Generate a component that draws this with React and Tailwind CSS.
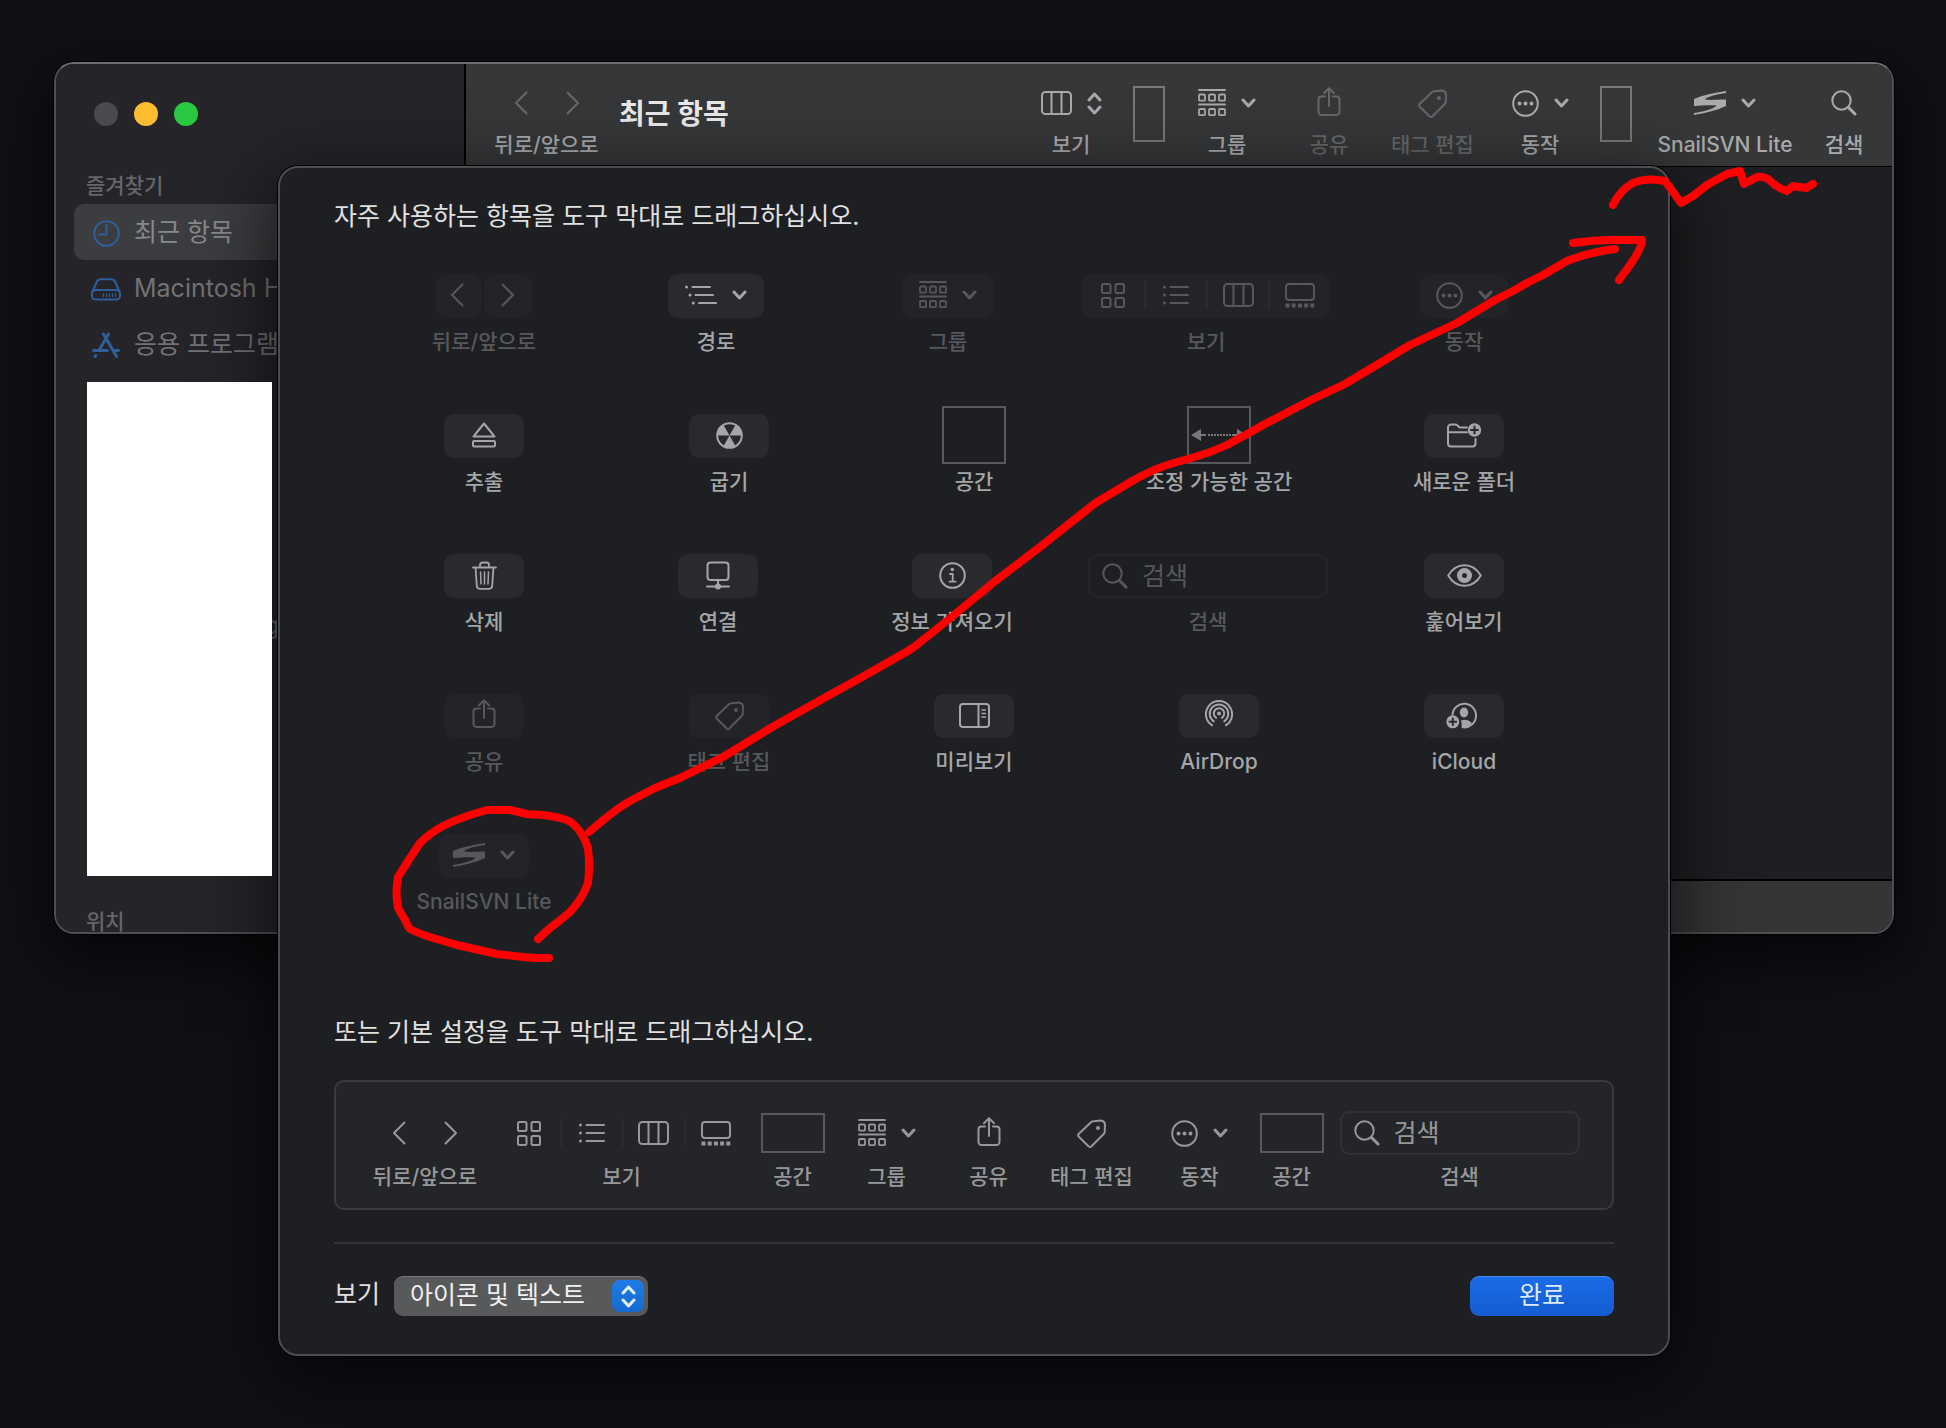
import React, { useState } from 'react';
import clsx from 'clsx';

// --- Icons ---
const Svg = ({ w, h, sw = 2, className, children }) => (
  <svg
    width={w}
    height={h}
    viewBox={`0 0 ${w} ${h}`}
    fill="none"
    stroke="currentColor"
    strokeWidth={sw}
    strokeLinecap="round"
    strokeLinejoin="round"
    aria-hidden="true"
    className={clsx('shrink-0', className)}
  >
    {children}
  </svg>
);

const BackIcon = () => <Svg w={14} h={24}><path d="M12.5 1.5 2 12l10.5 10.5" /></Svg>;
const ForwardIcon = () => <Svg w={14} h={24}><path d="M1.5 1.5 12 12 1.5 22.5" /></Svg>;
const ChevronIcon = () => <Svg w={15} h={10} sw={3}><path d="m2 2 5.5 6L13 2" /></Svg>;
const UpDownIcon = () => (
  <Svg w={15} h={23} sw={3}><path d="m2 8 5.5-6L13 8M2 15l5.5 6L13 15" /></Svg>
);

const ColumnsIcon = () => (
  <Svg w={31} h={24}>
    <rect x="1" y="1" width="29" height="22" rx="3.5" />
    <path d="M10.5 1v22M20.5 1v22" />
  </Svg>
);

const GridIcon = () => (
  <Svg w={24} h={25}>
    <rect x="1" y="1" width="8.5" height="9" rx="1.5" />
    <rect x="14.5" y="1" width="8.5" height="9" rx="1.5" />
    <rect x="1" y="15" width="8.5" height="9" rx="1.5" />
    <rect x="14.5" y="15" width="8.5" height="9" rx="1.5" />
  </Svg>
);

const ListIcon = () => (
  <Svg w={26} h={20}>
    <path d="M7.5 2H25M7.5 10H25M7.5 18H25" />
    <path d="M1.5 2h.01M1.5 10h.01M1.5 18h.01" strokeWidth="3" />
  </Svg>
);

const GalleryIcon = () => (
  <Svg w={30} h={25}>
    <rect x="1" y="1" width="28" height="16" rx="3" />
    <path d="M.5 22.5h29" strokeWidth="4" strokeLinecap="butt" strokeDasharray="4 2.2" />
  </Svg>
);

const GroupIcon = () => (
  <Svg w={28} h={28} sw={1.8}>
    <path d="M1 1h26M1 15.5h26" />
    {[1, 11, 21].map((x) => (
      <React.Fragment key={x}>
        <rect x={x} y="5.5" width="6" height="6.2" rx="1" />
        <rect x={x} y="20" width="6" height="6.2" rx="1" />
      </React.Fragment>
    ))}
  </Svg>
);

const ShareIcon = () => (
  <Svg w={24} h={29} className="-mt-1">
    <path d="M8 9.5H4.5a3 3 0 0 0-3 3V25a3 3 0 0 0 3 3h15a3 3 0 0 0 3-3V12.5a3 3 0 0 0-3-3H16" />
    <path d="M12 19V1.5M7 6.3l5-5 5 5" />
  </Svg>
);

const TagIcon = () => (
  <Svg w={29} h={29}>
    <path d="M16.5 2.2 24 1.6Q27.600 2 28 5.5l-.3 7.5q-.2 1.2-1 2L14.5 27.3q-1.5 1.3-3 0L1.8 17.8q-1.300-1.500 0-3L14 3.200q1-1 2.500-1Z" />
    <circle cx="21" cy="9" r="1.2" fill="currentColor" strokeWidth="1.5" />
  </Svg>
);

const ActionIcon = () => (
  <Svg w={27} h={27}>
    <circle cx="13.5" cy="13.5" r="12.3" />
    <path d="M7.5 13.5h.01M13.5 13.5h.01M19.5 13.5h.01" strokeWidth="4" />
  </Svg>
);

const SnailIcon = () => (
  <Svg w={32} h={24}>
    <path
      d="M0 8C9 4 20 2 32 0v2C24 3.2 13 5.5 11 8.3 14 9.5 24 8.5 32 8.5V15C22 19.8 11 22 0 24v-2c9-1.200 20-4 22.500-7.500C17 13.600 8 14.600 0 15Z"
      fill="currentColor"
      stroke="none"
    />
  </Svg>
);

const SearchIcon = () => (
  <Svg w={26} h={26}>
    <circle cx="10.5" cy="10.5" r="9.2" />
    <path d="m17.5 17.5 6.5 6.5" strokeWidth="3" />
  </Svg>
);

const PathIcon = () => (
  <Svg w={32} h={20}>
    <path d="M7.5 2H25M10.5 10H28M14 18h17" />
    <path d="M1.5 2h.01M5 10h.01M8.3 18h.01" strokeWidth="3" />
  </Svg>
);

const EjectIcon = () => (
  <Svg w={24} h={26}>
    <path d="M12 1.5 22.5 14.5h-21Z" />
    <rect x="1" y="19" width="22" height="5.5" rx="1.2" />
  </Svg>
);

const BurnIcon = () => (
  <Svg w={27} h={27}>
    <circle cx="13.5" cy="13.5" r="12.3" />
    <path
      d="M13.5 13.5H1.2A12.3 12.3 0 0 1 7.4 2.8ZM13.5 13.5 19.6 2.8A12.3 12.3 0 0 1 25.8 13.5ZM13.5 13.5l6.1 10.7a12.3 12.3 0 0 1-12.2 0Z"
      fill="currentColor"
      stroke="none"
    />
  </Svg>
);

const NewFolderIcon = () => (
  <Svg w={35} h={25}>
    <path d="M20 4.5h-7.5l-2-2Q9.5 1.5 8 1.5H4a3 3 0 0 0-3 3V20.5a3 3 0 0 0 3 3h21.5a3 3 0 0 0 3-3V16M1 9.2h19" />
    <circle cx="27.5" cy="7" r="6.7" fill="currentColor" stroke="none" />
    <path d="M27.5 3.5v7M24 7h7" stroke="#292a2e" />
  </Svg>
);

const TrashIcon = () => (
  <Svg w={25} h={29} sw={1.8}>
    <path d="M1 6.5h23M8 6.2V4q0-2.5 2.5-2.5h4Q17 1.5 17 4v2.2M3.5 6.5l1.3 18.3q.2 3 3 3h9.4q2.8 0 3-3L21.5 6.5" />
    <path d="m8.5 11 .5 12M12.5 11v12M16.5 11l-.5 12" strokeWidth="1.5" />
  </Svg>
);

const ConnectIcon = () => (
  <Svg w={24} h={29}>
    <rect x="1.5" y="1.5" width="21" height="17.5" rx="3" />
    <path d="M12 19v6M1 25.5h22" />
    <circle cx="12" cy="25.5" r="2" fill="currentColor" />
  </Svg>
);

const InfoIcon = () => (
  <Svg w={27} h={27}>
    <circle cx="13.5" cy="13.5" r="12.3" />
    <path d="M11 12h2.7v7.5M10.5 19.7h6" strokeWidth="1.8" />
    <circle cx="13.3" cy="7.5" r=".8" fill="currentColor" />
  </Svg>
);

const EyeIcon = () => (
  <Svg w={35} h={23}>
    <path d="M1.2 11.5C5 5 11 1.2 17.5 1.2S30 5 33.8 11.5C30 18 24 21.8 17.5 21.8S5 18 1.2 11.5Z" />
    <circle cx="17.5" cy="11.5" r="5" strokeWidth="5" />
  </Svg>
);

const PreviewIcon = () => (
  <Svg w={31} h={25}>
    <rect x="1" y="1" width="29" height="23" rx="3" />
    <path d="M19.5 1v23" />
    <path d="M23 7h3.5M23 10.5h3.5M23 14h3.5" strokeWidth="1.5" />
  </Svg>
);

const AirDropIcon = () => (
  <Svg w={28} h={28} className="-mt-1">
    <circle cx="14" cy="14.5" r="2" fill="currentColor" stroke="none" />
    <path d="M11.2 18.8a5.2 5.2 0 1 1 5.6 0" />
    <path d="M8.8 22.4a9.3 9.3 0 1 1 10.4 0" />
    <path d="M7 26.2a13.1 13.1 0 1 1 14 0" />
  </Svg>
);

const ICloudIcon = () => (
  <Svg w={32} h={27} className="-ml-1">
    <path d="M6.5 12.5A11.8 11.8 0 1 1 17 25.3" />
    <ellipse cx="18" cy="10.5" rx="4.2" ry="5" fill="currentColor" stroke="none" />
    <path d="M15 18.5q6-2.2 11 2.5-4 4.8-10.5 5 .8-4-.5-7.5Z" fill="currentColor" stroke="none" />
    <circle cx="6.8" cy="19.8" r="6.5" fill="currentColor" stroke="none" />
    <path d="M6.8 16.5v6.6M3.5 19.8h6.6" stroke="#292a2e" />
  </Svg>
);

const ClockIcon = () => (
  <Svg w={27} h={27}>
    <circle cx="13.5" cy="13.5" r="12.3" />
    <path d="M13.5 5v9.5H6.5" />
  </Svg>
);

const DriveIcon = () => (
  <Svg w={30} h={23}>
    <path d="M1.5 13.5 6 3.5Q7 1.2 9.5 1.2h11Q23 1.2 24 3.5l4.5 10" />
    <rect x="1" y="12" width="28" height="9.5" rx="3.5" />
    <path d="M12.5 15.5v3M15.5 15.5v3M18.5 15.5v3M21.5 15.5v3M24.5 15.5v3" strokeWidth="1.2" />
  </Svg>
);

const AppsIcon = () => (
  <Svg w={28} h={26} sw={3}>
    <path d="M16.5 2 7 18.5M3.8 23.5l-.8 1M11.5 2l13 22.5M1.5 18.5h14M21.5 18.5h5" />
  </Svg>
);

const StretchIcon = () => (
  <Svg w={56} h={12}>
    <path d="M0 6 10 0v12ZM56 6 46 0v12Z" fill="currentColor" stroke="none" />
    <path d="M10 6h5M41 6h5" strokeLinecap="butt" />
    <path d="M17 6h24" strokeLinecap="butt" strokeDasharray="2 1" />
  </Svg>
);

// --- Building blocks ---
const ToolItem = ({ label, className, children }) => (
  <div className={clsx('flex shrink-0 flex-col items-center', className)}>
    <div className="flex h-11 items-center justify-center">{children}</div>
    <span className="text-[21px] leading-6 font-medium whitespace-nowrap">{label}</span>
  </div>
);

const PlainButton = ({ label, className, children, disabled }) => (
  <button type="button" aria-label={label} disabled={disabled} className={clsx('flex items-center gap-[15px]', className)}>
    {children}
  </button>
);

const PillButton = ({ label, disabled, className, children }) => (
  <button
    type="button"
    aria-label={label}
    disabled={disabled}
    className={clsx(
      'flex h-11 items-center justify-center gap-[15px] rounded-[10px] pb-0.5',
      disabled ? 'bg-[#232428]' : 'bg-[#292a2e]',
      className || 'w-20'
    )}
  >
    {children}
  </button>
);

const viewModes = [
  { name: '아이콘', icon: <GridIcon /> },
  { name: '목록', icon: <ListIcon /> },
  { name: '계층', icon: <ColumnsIcon /> },
  { name: '갤러리', icon: <GalleryIcon /> },
];

const ViewSwitch = ({ disabled }) => (
  <div className={clsx('flex h-11 items-center rounded-[10px]', disabled && 'bg-[#232428] pb-0.5')}>
    {viewModes.map((mode, i) => (
      <button
        key={mode.name}
        type="button"
        aria-label={mode.name}
        disabled={disabled}
        className={clsx('flex h-7 w-[62px] items-center justify-center', i > 0 && 'border-l-2 border-[#2b2c30]')}
      >
        {mode.icon}
      </button>
    ))}
  </div>
);

const SearchField = ({ disabled }) => (
  <label
    className={clsx(
      'flex h-11 w-60 items-center gap-3.5 rounded-[10px] border-2 px-3',
      disabled ? 'border-[#26272b]' : 'border-[#303135]'
    )}
  >
    <SearchIcon />
    <input
      type="search"
      placeholder="검색"
      aria-label="검색"
      disabled={disabled}
      className="w-full min-w-0 bg-transparent text-[25px] leading-8 outline-none placeholder:text-current"
    />
  </label>
);

const paletteRows = [
  [
    {
      label: '뒤로/앞으로',
      disabled: true,
      content: (
        <div className="flex gap-0.5">
          <PillButton label="뒤로" disabled className="w-[46px] pr-1"><BackIcon /></PillButton>
          <PillButton label="앞으로" disabled className="w-12"><ForwardIcon /></PillButton>
        </div>
      ),
    },
    { label: '경로', icon: <><PathIcon /><ChevronIcon /></>, width: 'w-24' },
    { label: '그룹', icon: <><GroupIcon /><ChevronIcon /></>, width: 'w-[92px]', disabled: true },
    { label: '보기', disabled: true, content: <ViewSwitch disabled /> },
    { label: '동작', icon: <><ActionIcon /><ChevronIcon /></>, width: 'w-[88px]', disabled: true },
  ],
  [
    { label: '추출', icon: <EjectIcon /> },
    { label: '굽기', icon: <BurnIcon /> },
    { label: '공간', content: <div className="mb-0.5 h-[58px] w-16 border-2 border-[#58595c]" /> },
    {
      label: '조정 가능한 공간',
      content: (
        <div className="mb-0.5 flex h-[58px] w-16 items-center justify-center border-2 border-[#58595c] text-[#77787a]">
          <StretchIcon />
        </div>
      ),
    },
    { label: '새로운 폴더', icon: <NewFolderIcon /> },
  ],
  [
    { label: '삭제', icon: <TrashIcon /> },
    { label: '연결', icon: <ConnectIcon /> },
    { label: '정보 가져오기', icon: <InfoIcon /> },
    { label: '검색', disabled: true, content: <SearchField disabled /> },
    { label: '훑어보기', icon: <EyeIcon /> },
  ],
  [
    { label: '공유', icon: <ShareIcon />, disabled: true },
    { label: '태그 편집', icon: <TagIcon />, disabled: true },
    { label: '미리보기', icon: <PreviewIcon /> },
    { label: 'AirDrop', icon: <AirDropIcon /> },
    { label: 'iCloud', icon: <ICloudIcon /> },
  ],
  [{ label: 'SnailSVN Lite', icon: <><SnailIcon /><ChevronIcon /></>, width: 'w-[90px]', disabled: true }],
];

const Palette = () => (
  <div className="flex flex-col gap-[60px] px-[52px]">
    {paletteRows.map((row) => (
      <div key={row[0].label} className="flex justify-between">
        {row.map((item) => (
          <ToolItem
            key={item.label}
            label={item.label}
            className={clsx('min-w-[196px] gap-3', item.disabled ? 'text-[#57585b]' : 'text-[#a5a6a8]')}
          >
            {item.content || (
              <PillButton label={item.label} disabled={item.disabled} className={item.width}>
                {item.icon}
              </PillButton>
            )}
          </ToolItem>
        ))}
      </div>
    ))}
  </div>
);

const DefaultSet = () => (
  <div className="flex justify-center rounded-[10px] border-2 border-[#3a3b3e] bg-[#242529] pt-[29px] pb-[19px] text-[#97989a]">
    <ToolItem label="뒤로/앞으로" className="w-[143px] gap-2.5">
      <div className="flex gap-[38px]">
        <PlainButton label="뒤로"><BackIcon /></PlainButton>
        <PlainButton label="앞으로"><ForwardIcon /></PlainButton>
      </div>
    </ToolItem>
    <ToolItem label="보기" className="w-[250px] gap-2.5"><ViewSwitch /></ToolItem>
    <ToolItem label="공간" className="w-[92px] gap-2.5"><div className="h-10 w-16 border-2 border-[#58595c]" /></ToolItem>
    <ToolItem label="그룹" className="w-24 gap-2.5"><PlainButton label="그룹"><GroupIcon /><ChevronIcon /></PlainButton></ToolItem>
    <ToolItem label="공유" className="w-[108px] gap-2.5"><PlainButton label="공유"><ShareIcon /></PlainButton></ToolItem>
    <ToolItem label="태그 편집" className="w-[98px] gap-2.5"><PlainButton label="태그 편집"><TagIcon /></PlainButton></ToolItem>
    <ToolItem label="동작" className="w-[118px] gap-2.5"><PlainButton label="동작"><ActionIcon /><ChevronIcon /></PlainButton></ToolItem>
    <ToolItem label="공간" className="w-[66px] gap-2.5"><div className="h-10 w-16 border-2 border-[#58595c]" /></ToolItem>
    <ToolItem label="검색" className="w-[270px] gap-2.5"><SearchField /></ToolItem>
  </div>
);

const ToolbarSpace = ({ className }) => (
  <div className={clsx('flex justify-center pt-[5px]', className)}>
    <div className="h-14 w-8 border-2 border-[#77787a]" />
  </div>
);

const Toolbar = () => (
  <header className="flex h-[103px] shrink-0 border-b border-black bg-[#363739] pr-4 pl-7 text-[#a9aaac]">
    <div className="flex flex-1 items-start pt-[17px]">
      <ToolItem label="뒤로/앞으로" className="w-[105px] gap-2">
        <div className="flex gap-[38px] text-[#68696b]">
          <PlainButton label="뒤로" disabled><BackIcon /></PlainButton>
          <PlainButton label="앞으로" disabled><ForwardIcon /></PlainButton>
        </div>
      </ToolItem>
      <h1 className="mt-[15px] ml-5 text-[28px] leading-9 font-bold whitespace-nowrap text-[#e9e9ea]">최근 항목</h1>
    </div>
    <div className="flex items-start pt-[17px]">
      <ToolItem label="보기" className="w-[104px] gap-2"><PlainButton label="보기"><ColumnsIcon /><UpDownIcon /></PlainButton></ToolItem>
      <ToolbarSpace className="w-[52px]" />
      <ToolItem label="그룹" className="w-[104px] gap-2"><PlainButton label="그룹"><GroupIcon /><ChevronIcon /></PlainButton></ToolItem>
      <ToolItem label="공유" className="w-[100px] gap-2 text-[#666769]"><PlainButton label="공유" disabled><ShareIcon /></PlainButton></ToolItem>
      <ToolItem label="태그 편집" className="w-[107px] gap-2 text-[#666769]"><PlainButton label="태그 편집" disabled><TagIcon /></PlainButton></ToolItem>
      <ToolItem label="동작" className="w-[108px] gap-2"><PlainButton label="동작"><ActionIcon /><ChevronIcon /></PlainButton></ToolItem>
      <ToolbarSpace className="w-11" />
      <ToolItem label="SnailSVN Lite" className="w-[174px] gap-2"><PlainButton label="SnailSVN Lite"><SnailIcon /><ChevronIcon /></PlainButton></ToolItem>
      <ToolItem label="검색" className="w-16 gap-2"><PlainButton label="검색"><SearchIcon /></PlainButton></ToolItem>
    </div>
  </header>
);

const places = [
  { name: '최근 항목', icon: <ClockIcon />, selected: true },
  { name: 'Macintosh HD', icon: <DriveIcon /> },
  { name: '응용 프로그램', icon: <AppsIcon /> },
];

const Sidebar = () => (
  <aside className="w-[410px] shrink-0 border-r-2 border-black bg-[#252429] text-[#66666a]">
    <div className="flex gap-4 px-[38px] pt-[38px]">
      <button type="button" aria-label="닫기" className="size-6 rounded-full bg-[#4a494e]" />
      <button type="button" aria-label="최소화" className="size-6 rounded-full bg-[#febc30]" />
      <button type="button" aria-label="확대" className="size-6 rounded-full bg-[#28c840]" />
    </div>
    <h2 className="mt-12 px-[30px] text-[21px] leading-6 font-medium">즐겨찾기</h2>
    <nav className="mt-1.5 px-[18px]">
      {places.map((place) => (
        <a
          key={place.name}
          href="#"
          className={clsx(
            'flex h-14 items-center rounded-[10px] pt-0.5 text-[25px] whitespace-nowrap',
            place.selected ? 'bg-[#3c3d40] text-[#88898b]' : 'text-[#737376]'
          )}
        >
          <span className="flex w-[60px] justify-center pl-1 text-[#2f5f9b]">{place.icon}</span>
          {place.name}
        </a>
      ))}
    </nav>
    <div className="mt-2.5 flex items-center pl-[31px] text-[25px] leading-8">
      <div className="relative z-20 h-[494px] w-[185px] bg-white" />
      <span className="-ml-2 pb-2">g</span>
    </div>
    <h2 className="mt-[34px] h-[22px] px-[30px] text-[21px] leading-6 font-medium">위치</h2>
  </aside>
);

const CustomizeSheet = () => {
  const [display, setDisplay] = useState('both');

  return (
    <section className="z-10 mt-[166px] mr-[276px] mb-[72px] ml-[278px] flex flex-col self-start rounded-[20px] border-2 border-[#4c4d50] bg-[#1e1f23] px-[54px] pt-8 pb-[38px] text-[#e1e1e2] shadow-[0_0_0_1px_#000,0_20px_70px_10px_rgba(0,0,0,0.6)] [grid-area:1/1]">
      <p className="mb-[42px] text-[25px] leading-8">자주 사용하는 항목을 도구 막대로 드래그하십시오.</p>
      <Palette />
      <p className="mt-[102px] mb-8 text-[25px] leading-8">또는 기본 설정을 도구 막대로 드래그하십시오.</p>
      <DefaultSet />
      <hr className="mt-8 border-t-2 border-[#343538]" />
      <div className="mt-8 flex items-center">
        <label htmlFor="display" className="mr-3.5 pb-1 text-[25px] leading-8">보기</label>
        <div className="relative">
          <select
            id="display"
            value={display}
            onChange={(e) => setDisplay(e.target.value)}
            className="h-10 w-[254px] appearance-none rounded-[9px] border-t border-[#77787a] bg-[#58595b] pr-11 pb-1 pl-4 text-[25px] leading-8 text-[#f0f0f0] outline-none"
          >
            <option value="both">아이콘 및 텍스트</option>
            <option value="icon">아이콘만</option>
            <option value="text">텍스트만</option>
          </select>
          <span className="pointer-events-none absolute top-1 right-1 flex size-8 items-center justify-center rounded-lg bg-gradient-to-b from-[#1f7ce6] to-[#1469cf] text-[#e3f1ff]">
            <UpDownIcon />
          </span>
        </div>
        <button
          type="button"
          className="ml-auto h-10 w-36 rounded-[9px] border-t border-[#4d8df0] bg-gradient-to-b from-[#1a6be8] to-[#155cd0] pb-1 text-[25px] leading-8 text-[#dcebff]"
        >
          완료
        </button>
      </div>
    </section>
  );
};

// Hand-drawn marks pointing the palette item at its toolbar slot
const Marks = () => (
  <svg
    viewBox="0 0 1946 1428"
    fill="none"
    stroke="#ff0000"
    strokeWidth="8"
    strokeLinecap="round"
    strokeLinejoin="round"
    aria-hidden="true"
    className="pointer-events-none absolute inset-x-0 top-0 z-20 w-full"
  >
    <path d="M549 958H536L523 957 497 954 457 945 430 937Q412 931 409 928L405 920 398 908Q395 892 398 877L410 858 420 843Q430 833 443 826 455 820 470 815L487 810H510L527 814 543 815Q566 818 572 823 583 832 588 848 590 867 588 883 583 898 570 912 562 919 550 928L538 939" />
    <path d="M589 832 607 817Q618 808 630 801L655 788 680 778 723 757 746 743 774 726 826 697 864 676 908 651Q916 646 923 640L948 620 994 582 1040 547 1084 512 1097 502 1134 480Q1155 468 1177 462L1195 457Q1212 452 1227 445L1249 433 1265 424 1311 400 1345 384 1380 363 1410 345 1457 323 1495 300 1513 291 1527 283 1543 275 1567 261Q1590 252 1615 249" />
    <path d="M1573 243Q1593 240 1613 240H1642Q1642 248 1630 265L1619 280" />
    <path d="M1613 205Q1620 190 1633 183 1647 177 1665 181 1669 186 1673 192L1681 203 1693 196 1707 185 1727 174 1740 171 1744 184 1757 177Q1763 176 1768 179 1777 188 1787 191L1793 186 1806 188 1813 184" />
  </svg>
);

export default function App() {
  return (
    <main className="relative grid min-h-screen bg-[#101116] font-['Inter','Noto_Sans_CJK_KR',sans-serif]">
      <div className="mt-[62px] mr-[52px] ml-[54px] flex self-start overflow-hidden rounded-[20px] border-2 border-[#4e4f51] border-t-[#6c6d6f] bg-[#1e1f22] shadow-[0_0_0_1px_#000,0_20px_60px_10px_rgba(0,0,0,0.6)] [grid-area:1/1]">
        <Sidebar />
        <div className="flex min-w-0 flex-1 flex-col">
          <Toolbar />
          <div className="flex-1" />
          <footer className="h-[53px] border-t-2 border-black bg-[#343537]" />
        </div>
      </div>
      <CustomizeSheet />
      <Marks />
    </main>
  );
}
